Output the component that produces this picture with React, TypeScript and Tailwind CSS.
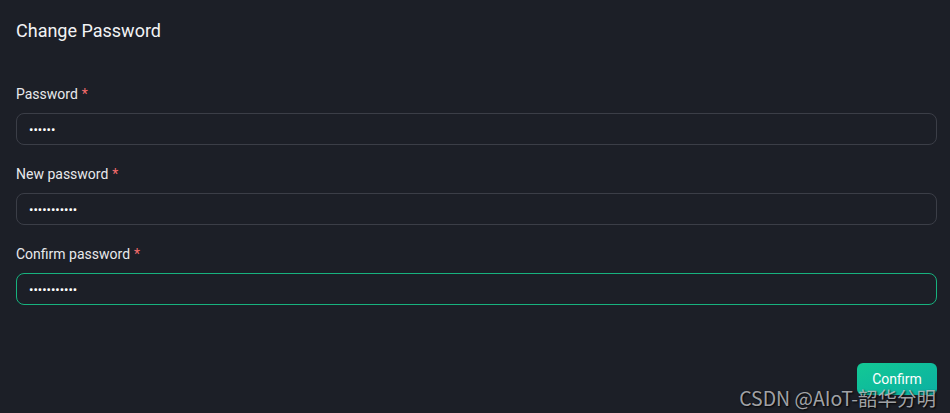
import type { ReactNode } from "react";

interface PasswordFieldProps {
  readonly label: string;
  readonly value: string;
  readonly focused?: boolean;
}

function RequiredMark(): ReactNode {
  return <span className="ml-1 text-[#f56c6c]">*</span>;
}

/**
 * One labelled password row. The focused row gets the green outline.
 */
function PasswordField({ label, value, focused = false }: PasswordFieldProps) {
  return (
    <div className="flex flex-col gap-[9px]">
      <label className="text-[14px] leading-5 text-[#e8e9ec]">
        {label}
        <RequiredMark />
      </label>
      <input
        type="password"
        defaultValue={value}
        autoFocus={focused}
        className={
          focused
            ? "h-8 w-full rounded-lg border border-[#17b27e] bg-transparent px-3 text-[13px] text-white caret-white outline-none"
            : "h-8 w-full rounded-lg border border-[#3b3e47] bg-transparent px-3 text-[13px] text-white outline-none"
        }
      />
    </div>
  );
}

export default function App() {
  return (
    <div className="relative h-[413px] w-[950px] overflow-hidden bg-[#1c1f27] font-['Roboto',sans-serif]">
      <div className="flex flex-col pl-4 pr-[13px] pt-[19px]">
        <h1 className="text-[18px] leading-6 text-[#f2f3f5]">Change Password</h1>

        <form className="mt-[41px] flex flex-col gap-[19px]">
          <PasswordField label="Password" value="123456" />
          <PasswordField label="New password" value="12345678901" />
          <PasswordField label="Confirm password" value="12345678901" focused />
        </form>

        <div className="mt-[58px] flex justify-end">
          <button
            type="button"
            className="h-8 w-20 rounded-md bg-gradient-to-br from-[#13c994] to-[#0dafa2] text-[14px] text-white"
          >
            Confirm
          </button>
        </div>
      </div>

      <span className="pointer-events-none absolute bottom-[3px] right-[14px] font-['Noto_Sans_CJK_SC',sans-serif] text-[19.5px] leading-6 text-[#c9cacd]/80 [text-shadow:1px_1px_2px_#000]">
        CSDN @AIoT-韶华分明
      </span>
    </div>
  );
}
